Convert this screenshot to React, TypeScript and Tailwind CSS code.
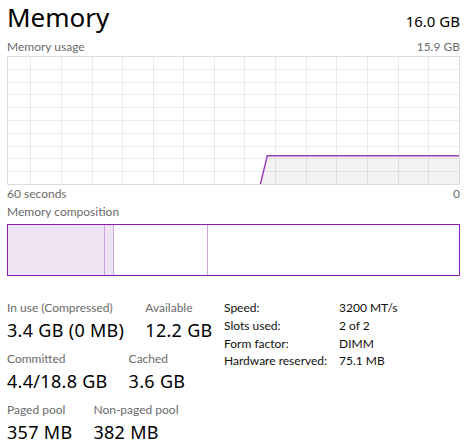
import React from 'react';

// grid positions inside the usage graph (px, relative to the graph box)
const vLines = [23, 54, 85, 115, 146, 176, 207, 237, 268, 299, 329, 360, 391, 421];
const hLines = [1, 2, 3, 4, 5, 6, 7, 8, 9].map(k => Math.round(k * 12.8));

// in use / modified / standby / free
const composition = [
    { w: 'w-[97px]', cls: 'bg-[#efe4f3] border-r border-[#cba5d9]' },
    { w: 'w-[9px]', cls: 'bg-[#efe4f3] border-r border-[#cba5d9]' },
    { w: 'w-[94px]', cls: 'bg-white border-r border-[#cba5d9]' },
];

function UsageGraph() {
    const W = 453;
    const H = 129;
    return (
        <svg width={W} height={H} viewBox={`0 0 ${W} ${H}`} className="block">
            <polygon points="253.3,128.5 260.3,99.8 452.5,99.8 452.5,128.5" fill="#f4f2f5" />
            {vLines.map(x => (
                <line key={`v${x}`} x1={x + 0.5} y1={0} x2={x + 0.5} y2={H} stroke="rgba(0,0,0,0.075)" strokeWidth={1} />
            ))}
            {hLines.map(y => (
                <line key={`h${y}`} x1={0} y1={y + 0.5} x2={W} y2={y + 0.5} stroke="rgba(0,0,0,0.075)" strokeWidth={1} />
            ))}
            <polyline points="253.3,128.5 260.3,99.8 452.5,99.8" fill="none" stroke="#9a3bb8" strokeWidth={1.4} />
            <rect x={0.5} y={0.5} width={W - 1} height={H - 1} fill="none" stroke="#dcdcdc" strokeWidth={1} />
        </svg>
    );
}

function Stat({ label, value }: { label: string; value: string }) {
    return (
        <div className="flex flex-col">
            <span className="font-['Lato',sans-serif] text-[12px] leading-[16px] text-[#6b6b6b] whitespace-nowrap">{label}</span>
            <span className="mt-[3px] text-[18px] leading-[22px] tracking-[0.3px] text-black whitespace-nowrap">{value}</span>
        </div>
    );
}

const hardware: [string, string][] = [
    ['Speed:', '3200 MT/s'],
    ['Slots used:', '2 of 2'],
    ['Form factor:', 'DIMM'],
    ['Hardware reserved:', '75.1 MB'],
];

export default function App() {
    return (
        <div className="w-[470px] h-[446px] overflow-hidden bg-white px-[7px] font-['Noto_Sans',sans-serif]">
            {/* Header */}
            <div className="flex items-baseline justify-between w-[453px] h-[34px] -mb-[3px]">
                <span className="text-[26px] leading-[34px] text-black">Memory</span>
                <span className="text-[15px] leading-[20px] text-black">16.0 GB</span>
            </div>

            {/* Usage graph */}
            <div className="mt-[8px] flex justify-between w-[453px] font-['Lato',sans-serif] text-[12px] leading-[16px] text-[#6b6b6b]">
                <span>Memory usage</span>
                <span>15.9 GB</span>
            </div>
            <div className="mt-[1px]">
                <UsageGraph />
            </div>
            <div className="pt-[1px] flex justify-between w-[453px] font-['Lato',sans-serif] text-[12px] leading-[16px] text-[#6b6b6b]">
                <span>60 seconds</span>
                <span>0</span>
            </div>

            {/* Composition */}
            <div className="mt-[2px] font-['Lato',sans-serif] text-[12px] leading-[16px] text-[#6b6b6b]">Memory composition</div>
            <div className="mt-[4px] flex w-[453px] h-[52px] border border-[#8b1fb4]">
                {composition.map((c, i) => (
                    <div key={i} className={`${c.w} h-full ${c.cls}`} />
                ))}
                <div className="flex-1" />
            </div>

            {/* Stats */}
            <div className="mt-[24px] flex items-start">
                <div className="w-[217px] shrink-0 flex flex-col gap-[10px]">
                    <div className="flex gap-[21px]">
                        <Stat label="In use (Compressed)" value="3.4 GB (0 MB)" />
                        <Stat label="Available" value="12.2 GB" />
                    </div>
                    <div className="flex gap-[21px]">
                        <Stat label="Committed" value="4.4/18.8 GB" />
                        <Stat label="Cached" value="3.6 GB" />
                    </div>
                    <div className="flex gap-[21px]">
                        <Stat label="Paged pool" value="357 MB" />
                        <Stat label="Non-paged pool" value="382 MB" />
                    </div>
                </div>
                <div className="-mt-[1px] grid grid-cols-[115px_auto] content-start font-['Lato',sans-serif] text-[12px] leading-[17.8px] text-[#111]">
                    {hardware.map(([k, v]) => (
                        <React.Fragment key={k}>
                            <span className="whitespace-nowrap">{k}</span>
                            <span className="whitespace-nowrap">{v}</span>
                        </React.Fragment>
                    ))}
                </div>
            </div>
        </div>
    );
}
